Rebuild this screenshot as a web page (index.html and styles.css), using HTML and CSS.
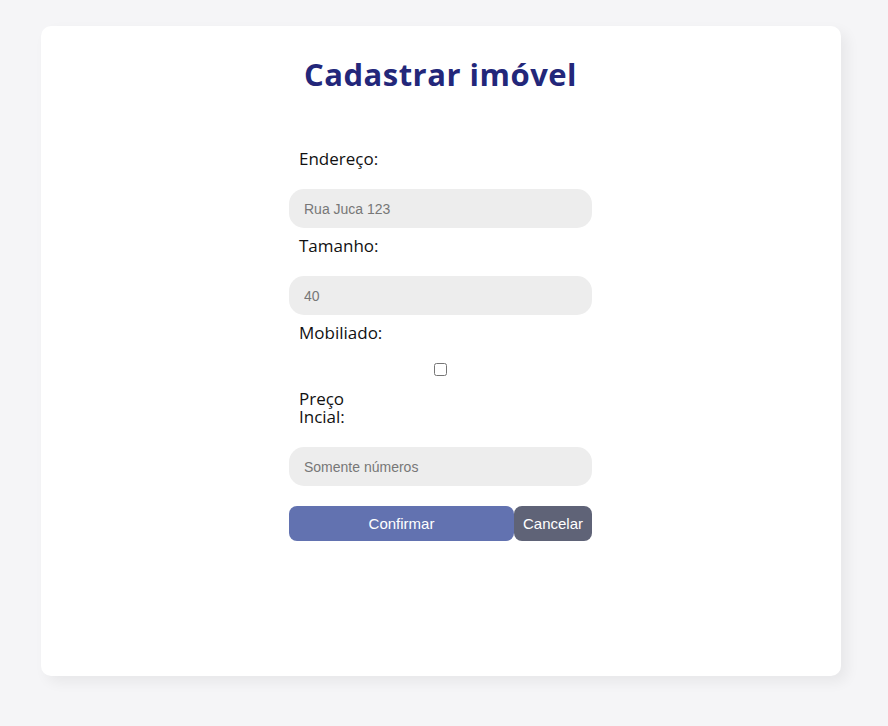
FILE: index.html
```html
<!DOCTYPE html>
<html lang="pt">
<head>
<meta charset="utf-8">
<link rel="stylesheet" href="styles.css">
</head>
<body>
<div class="page">
  <main class="card">
    <h1 class="title">Cadastrar imóvel</h1>
    <form class="form">
      <label class="label" for="end">Endereço:</label>
      <input class="input" id="end" type="text" placeholder="Rua Juca 123">
      <label class="label" for="tam">Tamanho:</label>
      <input class="input" id="tam" type="text" placeholder="40">
      <label class="label" for="mob">Mobiliado:</label>
      <div class="check-row"><input class="check" id="mob" type="checkbox"></div>
      <label class="label" for="preco">Preço Incial:</label>
      <input class="input" id="preco" type="text" placeholder="Somente números">
      <div class="actions">
        <button type="button" class="btn btn-confirm">Confirmar</button>
        <button type="button" class="btn btn-cancel">Cancelar</button>
      </div>
    </form>
  </main>
</div>
</body>
</html>
```
FILE: styles.css
```css
* { box-sizing: border-box; }
html, body { margin: 0; padding: 0; }
body {
  background: #f5f5f7;
  font-family: "Open Sans", "Liberation Sans", sans-serif;
  width: 888px;
  height: 726px;
}
.page {
  padding: 26px 0 0 41px;
}
.card {
  width: 800px;
  height: 650px;
  background: #ffffff;
  border-radius: 10px;
  box-shadow: 6px 6px 14px rgba(0, 0, 0, 0.06);
  display: flex;
  flex-direction: column;
  align-items: center;
  padding: 30px 1px 0 0;
}
.title {
  margin: 0;
  font-family: "Open Sans", sans-serif;
  font-weight: 700;
  font-size: 31px;
  line-height: 36px;
  color: #23277a;
  letter-spacing: 0.5px;
}
.form {
  width: 303px;
  margin-top: 58px;
  display: flex;
  flex-direction: column;
}
.label {
  display: block;
  width: 110px;
  padding: 0 10px;
  font-size: 17px;
  line-height: 18px;
  color: #111;
  margin: 0 0 21px 0;
}
.input {
  height: 39px;
  border: none;
  border-radius: 15px;
  background: #ededed;
  padding: 0 15px;
  font-family: "Liberation Sans", Arial, sans-serif;
  font-size: 14px;
  color: #333;
  margin-bottom: 9px;
  outline: none;
}
.input::placeholder { color: #777; }
.check-row {
  display: flex;
  justify-content: center;
  margin-bottom: 14px;
}
.check {
  width: 13px;
  height: 13px;
  margin: 0;
}
.actions {
  display: flex;
  margin-top: 11px;
}
.btn {
  height: 35px;
  border: none;
  border-radius: 8px;
  color: #fff;
  font-family: "Liberation Sans", Arial, sans-serif;
  font-size: 15px;
  padding: 0 9px;
}
.btn-confirm {
  flex: 1;
  background: #6272b0;
}
.btn-cancel {
  background: #5f6377;
}
```
